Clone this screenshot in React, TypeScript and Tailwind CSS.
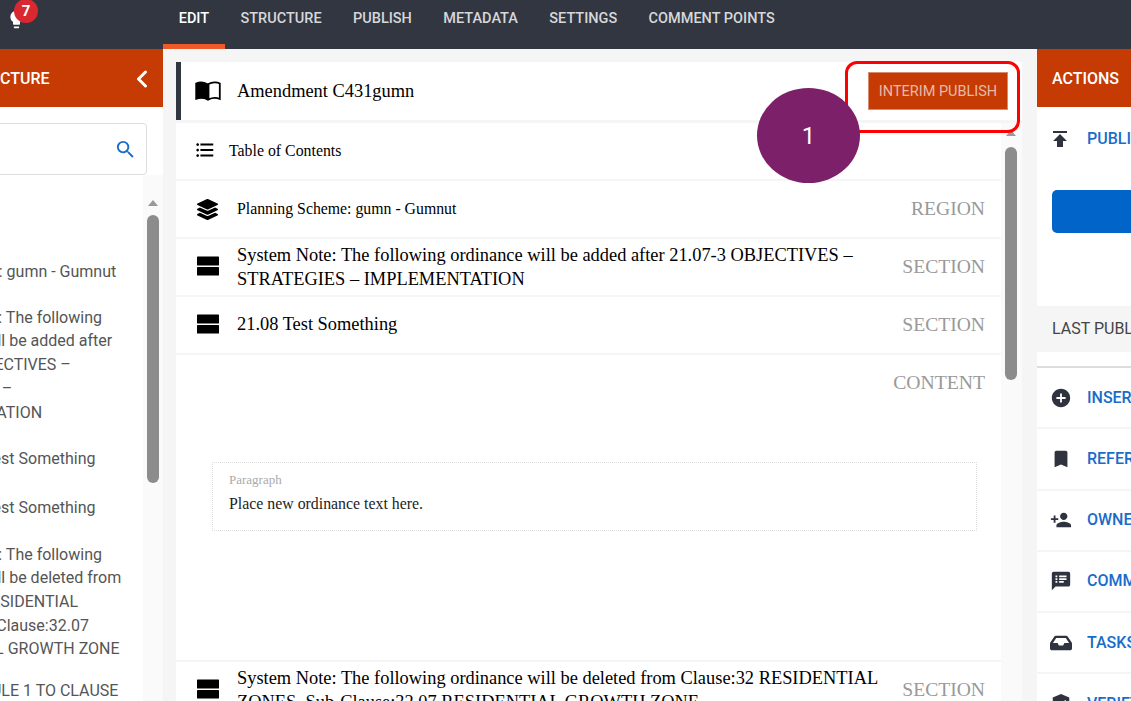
import React from "react";
import { MdLightbulb, MdSearch, MdFormatListBulleted, MdPublish, MdAddCircle, MdBookmark, MdPersonAdd, MdSpeakerNotes, MdVerifiedUser } from "react-icons/md";
import { FaLayerGroup, FaInbox } from "react-icons/fa";

const tabs = ["EDIT", "STRUCTURE", "PUBLISH", "METADATA", "SETTINGS", "COMMENT POINTS"];

function BookIcon() {
  return (
    <svg width="26" height="20" viewBox="0 0 26 20" className="shrink-0">
      <path d="M1 2.5C4 1 9 1 12.5 3V18.5C9 16.8 4 16.8 1 18Z" fill="#000" stroke="#000" strokeWidth="1.4" />
      <path d="M13.5 3C17 1 22 1 24.8 2.5V18C22 16.8 17 16.8 13.5 18.5Z" fill="#fff" stroke="#000" strokeWidth="1.8" />
    </svg>
  );
}

function AgendaIcon() {
  return (
    <svg width="22" height="20" viewBox="0 0 22 20" className="mb-[3px] ml-[21px] mr-[18px] shrink-0">
      <rect x="0" y="0.5" width="22" height="9" rx="0.6" fill="#000" />
      <rect x="0" y="11" width="22" height="8.5" rx="0.6" fill="#000" />
    </svg>
  );
}

function Row({ kind, children }: { kind: string; children: React.ReactNode }) {
  return (
    <div className="flex h-[56px] shrink-0 items-center bg-white">
      <AgendaIcon />
      <div className="flex-1 text-[18.4px] leading-[24px] text-black">{children}</div>
      <div className="ml-4 mr-[16px] pb-[1px] text-[19.6px] text-[#999999]">{kind}</div>
    </div>
  );
}

function Action({ icon, text }: { icon: React.ReactNode; text: string }) {
  return (
    <div className="flex h-[61.25px] shrink-0 items-center border-b-2 border-[#f5f5f5]">
      <div className="ml-[13px] flex w-[37px] shrink-0 text-[22px] text-[#2f3340]">{icon}</div>
      <span className="whitespace-nowrap text-[16px] font-medium text-[#1a6cc9]">{text}</span>
    </div>
  );
}

export default function App() {
  return (
    <div className="relative flex h-[701px] w-[1131px] flex-col overflow-hidden bg-[#f5f5f5] font-['Roboto',sans-serif]">
      <header className="flex h-[49px] shrink-0 bg-[#323640]">
        <div className="relative w-[163px] shrink-0">
          <MdLightbulb className="absolute left-[6px] top-[9px] text-[21px] text-white" />
          <span className="absolute left-[14px] top-[-1px] flex h-6 w-6 items-center justify-center rounded-full bg-[#d9282f] text-[15px] font-bold text-white">7</span>
        </div>
        {tabs.map((t, i) => (
          <div
            key={t}
            className={`flex h-full items-start whitespace-nowrap border-b-[5px] px-[15.7px] pt-[8px] text-[14.5px] font-medium ${i === 0 ? "border-[#f0592a] text-white" : "border-transparent text-[#d6d8da]"}`}
          >
            {t}
          </div>
        ))}
      </header>

      <div className="flex min-h-0 flex-1">
        <aside className="flex w-[163px] shrink-0 flex-col bg-white">
          <div className="flex h-[58px] shrink-0 items-center justify-between bg-[#c63a04] pr-[15px] pt-[1px] text-white">
            <span className="ml-[-40px] text-[16px] font-medium">STRUCTURE</span>
            <svg width="12" height="18" viewBox="0 0 12 18" fill="none" stroke="#fff" strokeWidth="3" strokeLinecap="round" strokeLinejoin="round">
              <polyline points="9.5,2 2.5,9 9.5,16" />
            </svg>
          </div>
          <div className="shrink-0 pr-4 pt-4">
            <div className="ml-[-10px] flex h-[52px] items-center justify-end rounded-[4px] border border-[#dddddd] pr-[9px]">
              <MdSearch className="text-[23px] text-[#1a6cc9]" />
            </div>
          </div>
          <div className="flex min-h-0 flex-1">
            <div className="min-w-0 flex-1 overflow-hidden pt-[85px] text-[16px] leading-[23.7px] text-[#555555]">
              <div className="ml-[-125px] w-[268px]">Planning Scheme: gumn - Gumnut</div>
              <div className="ml-[-93px] mt-[22px] w-[222px]">System Note: The following ordinance will be added after 21.07-3 OBJECTIVES – STRATEGIES – IMPLEMENTATION</div>
              <div className="ml-[-60px] mt-[23px] w-[200px]">21.08 Test Something</div>
              <div className="ml-[-60px] mt-[25px] w-[200px]">21.08 Test Something</div>
              <div className="ml-[-93px] mt-[23px] w-[222px]">System Note: The following ordinance will be deleted from Clause:32 RESIDENTIAL ZONES, Sub-Clause:32.07 RESIDENTIAL GROWTH ZONE</div>
              <div className="ml-[-60px] mt-[18px] w-[229px] whitespace-nowrap">SCHEDULE 1 TO CLAUSE</div>
            </div>
            <div className="flex w-[20px] shrink-0 flex-col items-center bg-[#fafafa] pt-[25px]">
              <div className="h-0 w-0 border-x-[5px] border-b-[6px] border-x-transparent border-b-[#999999]" />
              <div className="mt-[9px] h-[268px] w-[12px] rounded-[6px] bg-[#8c8c8c]" />
            </div>
          </div>
        </aside>

        <main className="flex min-w-0 flex-1 flex-col pl-[13px] pr-[15px] pt-[13px] font-['Liberation_Serif',serif]">
          <div className="flex h-[58px] shrink-0 items-center border-l-[5px] border-[#323640] bg-white">
            <div className="ml-[14px] mr-[16px]"><BookIcon /></div>
            <span className="flex-1 pt-[2px] text-[18.4px] text-black">Amendment C431gumn</span>
            <button className="mr-[14px] h-[38px] w-[140px] border border-[#d98a6a] bg-[#c63a04] pt-[1px] font-['Roboto',sans-serif] text-[14.5px] text-[#e6bba8]">INTERIM PUBLISH</button>
          </div>
          <div className="mt-[3px] flex min-h-0 flex-1">
            <div className="flex w-[825px] flex-col gap-[2px] overflow-hidden">
              <div className="flex h-[56px] shrink-0 items-start bg-white pt-[16px]">
                <MdFormatListBulleted className="ml-[18px] mr-[13px] text-[22px] text-black" />
                <span className="text-[15.85px] text-black">Table of Contents</span>
              </div>
              <div className="flex h-[56px] shrink-0 items-center bg-white">
                <FaLayerGroup className="ml-[21px] mr-[19px] text-[21px] text-black" />
                <span className="flex-1 text-[15.8px] text-black">Planning Scheme: gumn - Gumnut</span>
                <span className="mr-[16px] pb-[1px] text-[19.6px] text-[#999999]">REGION</span>
              </div>
              <Row kind="SECTION">System Note: The following ordinance will be added after 21.07-3 OBJECTIVES – STRATEGIES – IMPLEMENTATION</Row>
              <Row kind="SECTION"><div className="pb-[2px]">21.08 Test Something</div></Row>
              <div className="flex h-[305px] shrink-0 flex-col bg-white">
                <div className="self-end pr-[16px] pt-[13px] text-[19.7px] text-[#999999]">CONTENT</div>
                <div className="ml-[36px] mt-[64px] h-[69px] w-[765px] border border-dotted border-[#dddddd] pl-[16px] pt-[7px]">
                  <div className="text-[13px] text-[#aaaaaa]">Paragraph</div>
                  <div className="mt-[3px] text-[15.85px] text-[#222222]">Place new ordinance text here.</div>
                </div>
              </div>
              <Row kind="SECTION">System Note: The following ordinance will be deleted from Clause:32 RESIDENTIAL ZONES, Sub-Clause:32.07 RESIDENTIAL GROWTH ZONE</Row>
            </div>
            <div className="flex w-[21px] shrink-0 flex-col items-center bg-[#fafafa] pr-[1px] pt-[7px]">
              <div className="h-0 w-0 border-x-[5px] border-b-[6px] border-x-transparent border-b-[#999999]" />
              <div className="mt-[11px] h-[233px] w-[12px] rounded-[6px] bg-[#8c8c8c]" />
            </div>
          </div>
        </main>

        <aside className="flex w-[94px] shrink-0 flex-col overflow-hidden">
          <div className="flex h-[58px] shrink-0 items-center bg-[#c63a04] pl-[15px] pt-[1px] text-[16px] font-medium text-white">ACTIONS</div>
          <div className="h-[199px] shrink-0 bg-white pl-[15px] pt-[20px]">
            <div className="flex items-center">
              <MdPublish className="ml-[-4px] mr-[13px] w-[24px] shrink-0 text-[24px] text-[#2f3340]" />
              <span className="ml-[2px] text-[16px] font-medium text-[#1a6cc9]">PUBLISH</span>
            </div>
            <div className="mt-[39px] h-[43px] w-[100px] rounded-l-[5px] bg-[#0064c8]" />
          </div>
          <div className="flex h-[46px] shrink-0 items-center whitespace-nowrap pl-[15px] text-[16px] text-[#444444]">LAST PUBLISHED</div>
          <div className="flex-1 bg-white pt-[14px]">
            <div className="border-t-2 border-[#dddddd]">
              <Action icon={<MdAddCircle />} text="INSERT" />
              <Action icon={<MdBookmark />} text="REFERENCES" />
              <Action icon={<MdPersonAdd />} text="OWNERS" />
              <Action icon={<MdSpeakerNotes />} text="COMMENTS" />
              <Action icon={<FaInbox />} text="TASKS" />
              <Action icon={<MdVerifiedUser />} text="VERIFY" />
            </div>
          </div>
        </aside>
      </div>

      <div className="absolute left-[845px] top-[61px] h-[72px] w-[175px] rounded-[12px] border-[3px] border-[#ff0000]" />
      <div className="absolute left-[757px] top-[88px] flex h-[95px] w-[103px] items-center justify-center rounded-[50%] bg-[#7b2069] text-[24px] text-white">1</div>
    </div>
  );
}
